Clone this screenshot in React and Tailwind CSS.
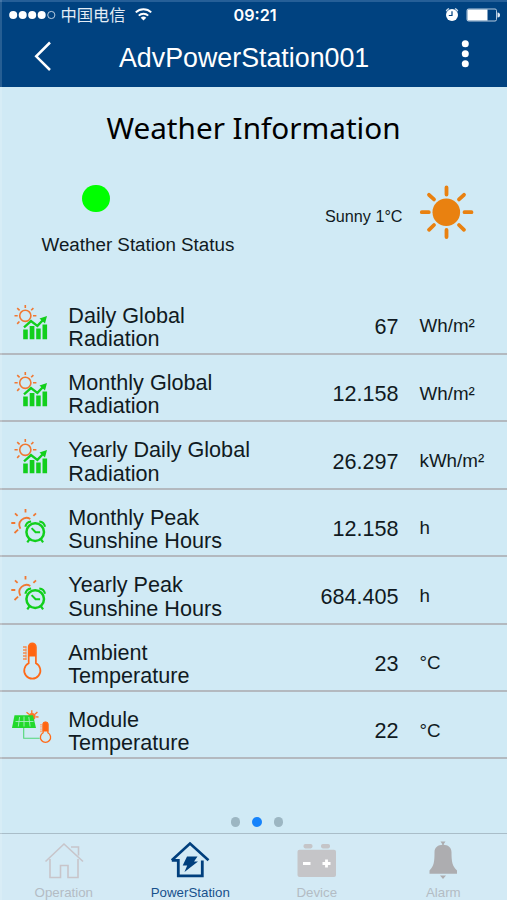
const ORANGE = '#f07832';
const GREEN = '#12cf1c';

function ChartSunIcon() {
  return (
    <svg className="h-[67px] w-[68px] shrink-0" viewBox="0 287.500 68 67" fill="none">
      <g stroke={ORANGE} strokeWidth="1.6">
        <circle cx="25.3" cy="315.3" r="5.6" strokeWidth="1.6" />
        <path d="M25.3 304.5v3M14.5 315.3h3.2M33 315.3h3.4M17.2 307.6l2.4 2.2M33.4 307.6l-2.2 2.2M17.2 323.4l2.2-2.4" />
      </g>
      <g fill={GREEN}>
        <path d="M23.2 329h4.600v9.800h-4.600zM29.700 325.600h4.700v13.200h-4.700zM36.200 328h4.500v10.800h-4.500zM42.500 324h4.600v14.800h-4.600z" />
        <path d="M39.500 318l7.500-2.500-2 7.500z" />
      </g>
      <path d="M24 326.800l7-6.200 6.400 4.800 6.800-7.200" stroke={GREEN} strokeWidth="2.300" />
    </svg>
  );
}

function ClockSunIcon() {
  return (
    <svg className="h-[67px] w-[68px] shrink-0" viewBox="0 489.500 68 67" fill="none">
      <g stroke={ORANGE} strokeWidth="1.8">
        <path d="M20.400 528.200A7.200 7.200 0 0 1 30.300 518.400" />
        <path d="M25.500 508.500v3.400M11.300 522.500h4M15 512.800l2.600 2.500M36 512.800l-2.600 2.500M14.500 532.500l3.600-3.300" />
      </g>
      <g stroke={GREEN}>
        <circle cx="35.200" cy="531.600" r="8.800" strokeWidth="2.500" />
        <path d="M31.600 527.600l4 4.200h4.500" strokeWidth="2" />
        <path d="M25.400 526.200a6.500 6.500 0 0 1 5.700-5.200M45 526.200a6.500 6.500 0 0 0-5.700-5.200M29.600 538.700l-2.300 3.200M40.800 538.700l2.300 3.200" strokeWidth="2.200" />
      </g>
    </svg>
  );
}

function ThermometerIcon() {
  return (
    <svg className="h-[67px] w-[68px] shrink-0" viewBox="0 624.500 68 67" fill="none">
      <path d="M28.500 656v-9a3.800 3.800 0 0 1 7.600 0v9z" fill="#ff6410" />
      <path
        d="M28.700 646.500a3.600 3.600 0 0 1 7.200 0v16.300a8.100 8.100 0 1 1-7.200 0z"
        stroke="#ff6a18"
        strokeWidth="1.700"
      />
      <path d="M23 646.500h3.500M23 649.500h3.500M23 652.500h3.500M23 655.500h3.500M23 658.500h3.500" stroke="#f58a4c" strokeWidth="1.500" />
      <path d="M26 646v13.500" stroke="#f58a4c" strokeWidth=".8" />
    </svg>
  );
}

function ModuleIcon() {
  return (
    <svg className="h-[67px] w-[68px] shrink-0" viewBox="0 691.500 68 67" fill="none">
      <circle cx="32" cy="716" r="3.600" fill="#ff7424" />
      <path d="M31.800 709.800v3M26.500 711.800l2.500 2M37.400 711.500l-2.400 2.200M38.500 716.500l-2.500-.2" stroke="#ff7424" strokeWidth="1.300" />
      <path d="M14.500 714.800h18.500l3 12.700H12z" fill="#22d92c" />
      <path d="M19.600 716.500l-1.300 9.500M24 716v10M28.800 716.500l1.300 9.500M15.500 721h18" stroke="#a6edc0" strokeWidth=".9" />
      <path d="M23.700 727.500v10.300h16" stroke="#50d878" strokeWidth="1.100" />
      <path d="M42.600 731v-6.800a2.900 2.900 0 0 1 5.800 0v6.800z" fill="#ff6410" />
      <path d="M43.100 724a2.400 2.400 0 0 1 4.800 0v8.300a5.100 5.100 0 1 1-4.800 0z" stroke="#ff6a18" strokeWidth="1.300" />
      <path d="M41 723.500v9" stroke="#f8aa80" strokeWidth="1.800" strokeDasharray="1.400 .8" />
    </svg>
  );
}

const rows = [
  { icon: ChartSunIcon, a: 'Daily Global', b: 'Radiation', value: '67', unit: 'Wh/m²' },
  { icon: ChartSunIcon, a: 'Monthly Global', b: 'Radiation', value: '12.158', unit: 'Wh/m²' },
  { icon: ChartSunIcon, a: 'Yearly Daily Global', b: 'Radiation', value: '26.297', unit: 'kWh/m²' },
  { icon: ClockSunIcon, a: 'Monthly Peak', b: 'Sunshine Hours', value: '12.158', unit: 'h' },
  { icon: ClockSunIcon, a: 'Yearly Peak', b: 'Sunshine Hours', value: '684.405', unit: 'h' },
  { icon: ThermometerIcon, a: 'Ambient', b: 'Temperature', value: '23', unit: '°C' },
  { icon: ModuleIcon, a: 'Module', b: 'Temperature', value: '22', unit: '°C' },
];

function StatusBar() {
  return (
    <div className="flex h-[28px] items-center">
      <svg className="h-[28px] w-[58px] shrink-0" viewBox="0 0 58 28" fill="#fff">
        <circle cx="13.200" cy="15" r="4" />
        <circle cx="22.700" cy="15" r="4" />
        <circle cx="32.200" cy="15" r="4" />
        <circle cx="41.700" cy="15" r="4" />
        <circle cx="51.300" cy="15" r="3.600" fill="none" stroke="#c9d9e8" strokeWidth=".9" />
      </svg>
      <span className="ml-[2.500px] w-[68px] whitespace-nowrap font-['Noto_Sans_CJK_SC',sans-serif] text-[16.300px] leading-[28px] text-[#e3ecf5]">中国电信</span>
      <svg className="h-[28px] w-[32px] shrink-0" viewBox="128.500 0 32 28" fill="none" stroke="#fff" strokeWidth="2">
        <path d="M135.300 12.400a11 11 0 0 1 15.400 0M138.300 15.600a6.600 6.600 0 0 1 9.400 0" />
        <path d="M140.200 17.800a4 4 0 0 1 5.600 0L143 20.500z" fill="#fff" stroke="none" />
      </svg>
      <span className="ml-[73px] w-[60px] pt-[2px] font-[Inter,sans-serif] text-[16.200px] font-semibold leading-[28px] text-white">09:21</span>
      <svg className="ml-auto h-[28px] w-[67px] shrink-0" viewBox="440 0 67 28" fill="none">
        <circle cx="452" cy="15" r="6" fill="#fff" />
        <path d="M452 11.300v4.200h-3.200" stroke="#00427f" strokeWidth="1.200" />
        <path d="M446.300 11.200a3.500 3.500 0 0 1 2.800-2.500M457.700 11.200a3.500 3.500 0 0 0-2.800-2.500" stroke="#d5e2ee" strokeWidth="1.300" />
        <rect x="467" y="9" width="29.500" height="12" rx="1.500" stroke="#b6cade" strokeWidth="1" />
        <rect x="467.500" y="9.500" width="20" height="11" fill="#fff" />
        <path d="M497.500 12.500a2.500 2.500 0 0 1 0 5z" fill="#e3ecf5" />
      </svg>
    </div>
  );
}

function Header() {
  return (
    <header className="h-[87px] border-t-2 border-[#255f98] bg-[#004280]">
      <div className="-mt-[2px]">
        <StatusBar />
        <div className="flex h-[59px] items-center">
          <svg className="h-[59px] w-[119px] shrink-0" viewBox="0 28 119 59" fill="none">
            <path d="M50 42.500L36.200 56.300 50 70" stroke="#fff" strokeWidth="2.500" />
          </svg>
          <h1 className="w-[260px] whitespace-nowrap pt-[1px] font-['Liberation_Sans',Arial,sans-serif] text-[26.800px] leading-[59px] text-white">AdvPowerStation001</h1>
          <svg className="ml-auto h-[59px] w-[60px] shrink-0" viewBox="447 28 60 59" fill="#fff">
            <circle cx="465.300" cy="43.700" r="3.500" />
            <circle cx="465.300" cy="53.700" r="3.500" />
            <circle cx="465.300" cy="63.700" r="3.500" />
          </svg>
        </div>
      </div>
    </header>
  );
}

function Row({ row }) {
  const Icon = row.icon;
  return (
    <li className="flex h-[67.400px] border-b-2 border-[#b3b9bf]">
      <Icon />
      <div className="w-[202px] whitespace-nowrap pl-[.3px] pt-[15.900px] text-[21.600px] leading-[23.500px]">
        {row.a}
        <br />
        {row.b}
      </div>
      <div className="w-[128.500px] pt-[25.300px] text-right text-[21.600px] leading-[27px]">{row.value}</div>
      <div className="ml-[21px] pt-[25.500px] text-[18.800px] leading-[26px]">{row.unit}</div>
    </li>
  );
}

function Tab({ label, active, className, children }) {
  return (
    <div className={`flex flex-col items-center ${className}`}>
      <svg className="mt-[.7px] h-[46px] w-[60px] shrink-0" viewBox="0 0 60 46" fill="none">
        {children}
      </svg>
      <span className={`pl-[.6px] pt-[1px] text-[13.300px] leading-[21px] ${active ? 'text-[#17508c]' : 'text-[#b3bcc4]'}`}>{label}</span>
    </div>
  );
}

export default function App() {
  return (
    <div className="relative flex h-[900px] w-[507px] flex-col overflow-hidden bg-[#d0eaf5] font-['Liberation_Sans',Arial,sans-serif] text-[#101a22]">
      <Header />
      <h2 className="mt-[20px] whitespace-nowrap text-center font-['Noto_Sans',sans-serif] text-[29.700px] leading-[42px] text-black">Weather Information</h2>
      <section className="flex h-[138.700px] shrink-0">
        <div className="ml-[41.500px] w-[283.500px]">
          <div className="ml-[40.500px] mt-[35.500px] h-[27.500px] w-[27.500px] rounded-full bg-[#00ff00]" />
          <p className="mt-[9px] whitespace-nowrap text-[18.800px] leading-[48px]">Weather Station Status</p>
        </div>
        <p className="w-[90.500px] whitespace-nowrap pt-[56px] text-[16.200px] leading-[22px]">Sunny 1°C</p>
        <svg className="mt-[33px] h-[60px] w-[60px]" viewBox="416 182 60 60" fill="none">
          <circle cx="446.300" cy="212.200" r="13.800" fill="#e98110" />
          <path
            d="M446.500 187.500v7M446.500 230v7M421.800 212.200h7M464.500 212.200h7M429 194.800l5 4.600M464 194.800l-5 4.600M429 229.800l5-4.800M464 229.800l-5-4.800"
            stroke="#e98110"
            strokeWidth="3.800"
            strokeLinecap="round"
          />
        </svg>
      </section>
      <ul className="flex flex-col">
        {rows.map((row, i) => (
          <Row key={i} row={row} />
        ))}
      </ul>
      <div className="mt-auto flex h-[16px] shrink-0 justify-center gap-[12px] pl-[7px]">
        <i className="h-[9.500px] w-[9.500px] rounded-full bg-[#9cb6c2]" />
        <i className="h-[9.500px] w-[9.500px] rounded-full bg-[#1683fb]" />
        <i className="h-[9.500px] w-[9.500px] rounded-full bg-[#9cb6c2]" />
      </div>
      <nav className="flex h-[67px] shrink-0 border-t-[1.500px] border-[#a9bdc8] bg-[#d3eaf5]">
        <Tab label="Operation" className="w-[127px]">
          <g stroke="#c8c5ca" strokeWidth="1.600">
            <path d="M11.500 26.500L30 9l19 17.500" />
            <path d="M16 24v18.500h10.500v-12H34v12h10V24M37 12h7.500v8.500" />
          </g>
        </Tab>
        <Tab label="PowerStation" active className="w-[126px]">
          <path d="M11.800 25.200L30 8.500l18.500 16.700" stroke="#003f7d" strokeWidth="2.600" />
          <path d="M11.800 25.300h6.500v15.500h24V25.500" stroke="#003f7d" strokeWidth="2.800" />
          <path d="M27 21.500h10.500L34 26.500h4L24.500 37l2.700-6.500h-4.500z" fill="#003f7d" />
        </Tab>
        <Tab label="Device" className="w-[127px]">
          <rect x="10.500" y="14.700" width="38.500" height="27.300" rx="2" fill="#c5c5c8" />
          <rect x="16.500" y="9" width="9" height="4.400" rx="1.800" fill="#c5c5c8" />
          <rect x="34" y="9" width="9" height="4.400" rx="1.800" fill="#c5c5c8" />
          <path d="M16 28.500h7.500M35.500 28.500h8M39.500 24.500v8" stroke="#fff" strokeWidth="2.800" />
        </Tab>
        <Tab label="Alarm" className="w-[126px]">
          <g fill="#adadb0">
            <path d="M27.500 6.500h5L30.800 9v2h-1.600V9zM27 40.500h6l-3 3.500z" />
            <path d="M30 9.800c5 0 8.500 2.700 8.500 7.500 0 9 .7 14 5.500 18.200v3.300H16.500v-3.300c4.500-4.200 5-9.200 5-18.200 0-4.800 3.500-7.500 8.500-7.500z" />
          </g>
        </Tab>
      </nav>
      <div className="pointer-events-none absolute inset-y-0 left-0 w-[2px] bg-white/15" />
    </div>
  );
}
